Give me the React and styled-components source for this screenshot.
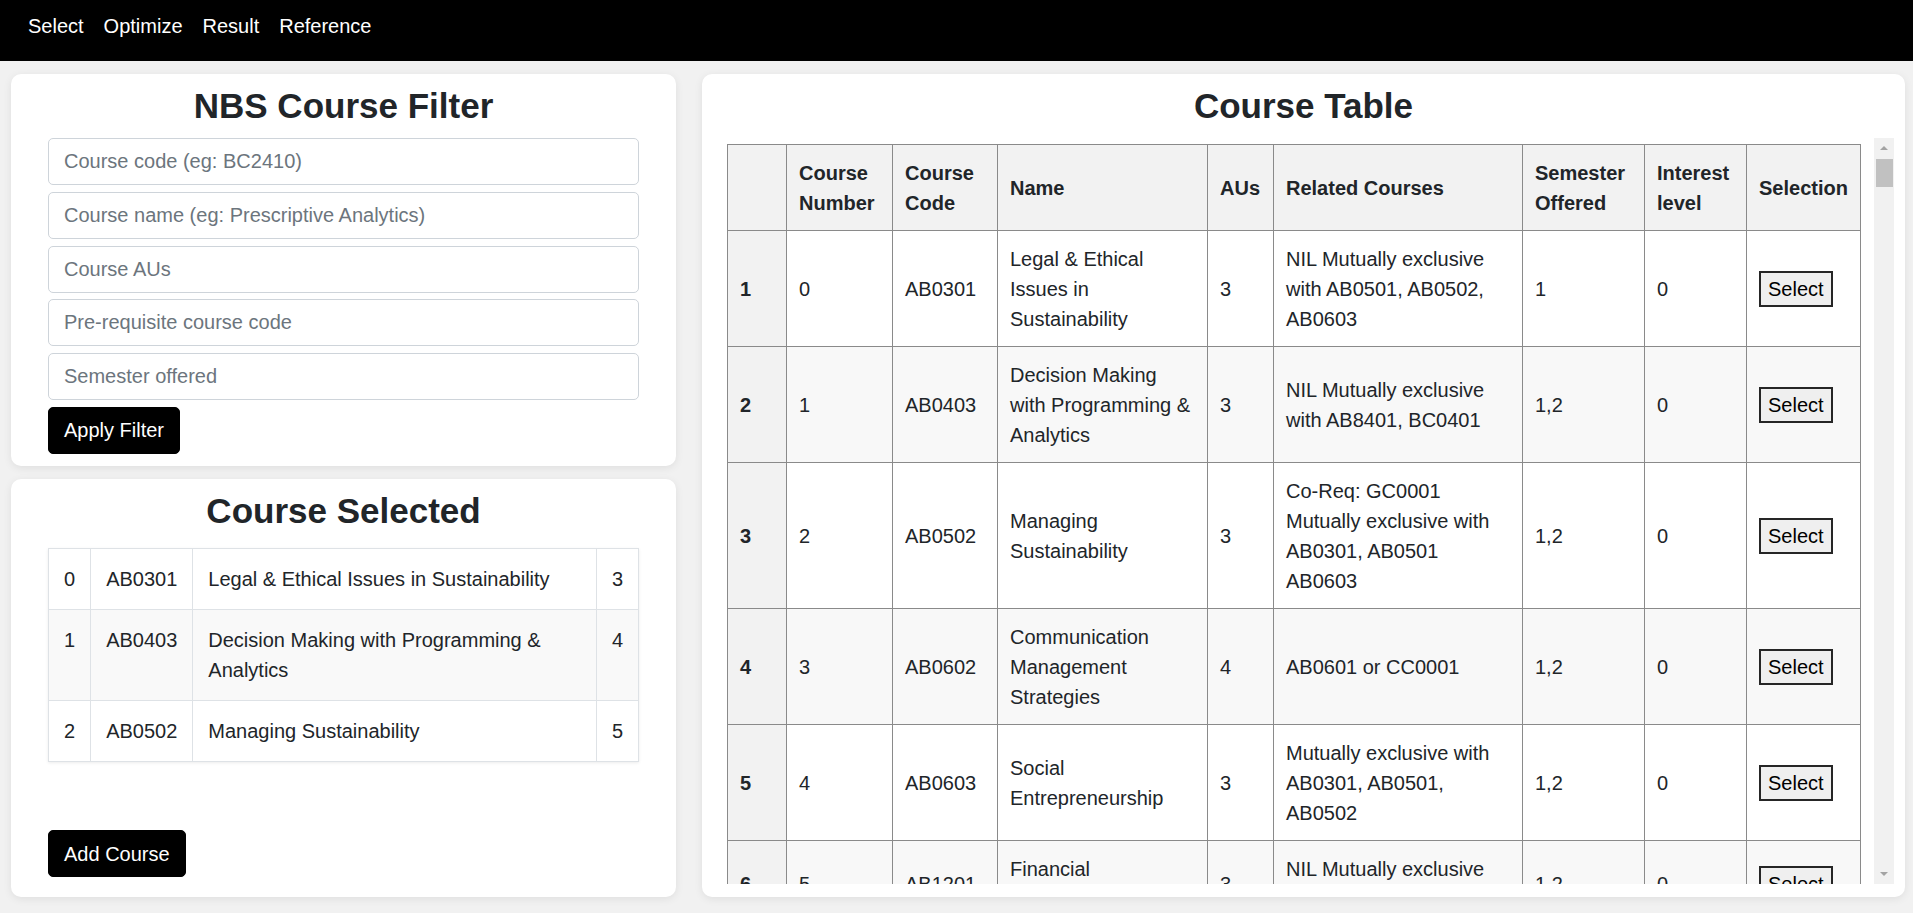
import React from "react";
import styled, { createGlobalStyle } from "styled-components";

const GlobalStyle = createGlobalStyle`
  * {
    box-sizing: border-box;
  }

  body {
    margin: 0;
    background: #f1f1f1;
    font-family: "Liberation Sans", Arial, sans-serif;
    font-size: 20px;
    line-height: 1.5;
    color: #212529;
  }
`;

const courses = [
  { code: "AB0301", name: "Legal & Ethical Issues in Sustainability", au: 3, related: "NIL Mutually exclusive with AB0501, AB0502, AB0603", sem: "1" },
  { code: "AB0403", name: "Decision Making with Programming & Analytics", au: 3, related: "NIL Mutually exclusive with AB8401, BC0401", sem: "1,2" },
  { code: "AB0502", name: "Managing Sustainability", au: 3, related: "Co-Req: GC0001 Mutually exclusive with AB0301, AB0501 AB0603", sem: "1,2" },
  { code: "AB0602", name: "Communication Management Strategies", au: 4, related: "AB0601 or CC0001", sem: "1,2" },
  { code: "AB0603", name: "Social Entrepreneurship", au: 3, related: "Mutually exclusive with AB0301, AB0501, AB0502", sem: "1,2" },
  { code: "AB1201", name: "Financial Management", au: 3, related: "NIL Mutually exclusive with BC2402", sem: "1,2" },
];

const selected = [
  { id: 0, code: "AB0301", name: "Legal & Ethical Issues in Sustainability", au: 3 },
  { id: 1, code: "AB0403", name: "Decision Making with Programming & Analytics", au: 4 },
  { id: 2, code: "AB0502", name: "Managing Sustainability", au: 5 },
];

const colWidths = [59, 106, 105, 210, 66, 249, 122, 102, 114];

const filterFields = [
  "Course code (eg: BC2410)",
  "Course name (eg: Prescriptive Analytics)",
  "Course AUs",
  "Pre-requisite course code",
  "Semester offered",
];

const App = () => {
  return (
    <>
      <GlobalStyle />
      <NavBar>
        <NavLink href="#">Select</NavLink>
        <NavLink href="#">Optimize</NavLink>
        <NavLink href="#">Result</NavLink>
        <NavLink href="#">Reference</NavLink>
      </NavBar>

      <Main>
        <LeftColumn>
          {/* filter */}
          <Card $pad="11px 37px 12px">
            <Title>NBS Course Filter</Title>
            <FilterForm onSubmit={(e) => e.preventDefault()}>
              {filterFields.map((f) => (
                <Input key={f} placeholder={f} />
              ))}
              <DarkButton type="submit">Apply Filter</DarkButton>
            </FilterForm>
          </Card>

          {/* selected courses */}
          <Card $pad="11px 37px 20px" $grow>
            <Title $gap={16.5}>Course Selected</Title>
            <SelectedTable>
              <tbody>
                {selected.map((c) => (
                  <tr key={c.id}>
                    <td>{c.id}</td>
                    <td>{c.code}</td>
                    <td>{c.name}</td>
                    <td>{c.au}</td>
                  </tr>
                ))}
              </tbody>
            </SelectedTable>
            <DarkButton $push>Add Course</DarkButton>
          </Card>
        </LeftColumn>

        {/* course table */}
        <Card $pad="11px 11px 13px">
          <Title>Course Table</Title>
          <TableArea>
            <TableViewport>
              <CourseTable>
                <colgroup>
                  {colWidths.map((w, i) => (
                    <col key={i} style={{ width: w }} />
                  ))}
                </colgroup>
                <thead>
                  <tr>
                    <th></th>
                    <th>Course Number</th>
                    <th>Course Code</th>
                    <th>Name</th>
                    <th>AUs</th>
                    <th>Related Courses</th>
                    <th>Semester Offered</th>
                    <th>Interest level</th>
                    <th>Selection</th>
                  </tr>
                </thead>
                <tbody>
                  {courses.map((c, i) => (
                    <tr key={i}>
                      <th scope="row">{i + 1}</th>
                      <td>{i}</td>
                      <td>{c.code}</td>
                      <td>{c.name}</td>
                      <td>{c.au}</td>
                      <td>{c.related}</td>
                      <td>{c.sem}</td>
                      <td>0</td>
                      <td>
                        <SelectButton>Select</SelectButton>
                      </td>
                    </tr>
                  ))}
                </tbody>
              </CourseTable>
            </TableViewport>
            <ScrollTrack>
              <ScrollArrow $dir="up" />
              <ScrollThumb />
              <ScrollArrow $dir="down" />
            </ScrollTrack>
          </TableArea>
        </Card>
      </Main>
    </>
  );
};

export default App;

const NavBar = styled.nav`
  height: 61px;
  background: #000;
  display: flex;
  align-items: flex-start;
  padding: 11px 0 0 18px;
`;

const NavLink = styled.a`
  color: #fff;
  text-decoration: none;
  padding: 0 10px;
  line-height: 30px;
`;

const Main = styled.main`
  display: grid;
  grid-template-columns: 665px 1fr;
  gap: 26px;
  height: calc(100vh - 61px);
  padding: 13px 9px 16px 11px;
`;

const LeftColumn = styled.div`
  display: flex;
  flex-direction: column;
  gap: 13px;
  min-height: 0;
`;

const Card = styled.section`
  background: #fff;
  border-radius: 10px;
  box-shadow: 0 2px 8px rgba(0, 0, 0, 0.08);
  padding: ${(p) => p.$pad};
  display: flex;
  flex-direction: column;
  min-height: 0;
  ${(p) => p.$grow && "flex: 1;"}
`;

const Title = styled.h3`
  margin: 0 0 ${(p) => p.$gap || 11}px;
  font-size: 35px;
  font-weight: 700;
  line-height: 1.2;
  text-align: center;
  color: #212529;
`;

const FilterForm = styled.form`
  display: flex;
  flex-direction: column;
  align-items: flex-start;
  gap: 6.75px;
`;

const Input = styled.input`
  width: 100%;
  height: 47px;
  padding: 7.5px 15px;
  font: inherit;
  color: #495057;
  background: #fff;
  border: 1px solid #ced4da;
  border-radius: 5px;
  outline: none;

  &::placeholder {
    color: #6c757d;
  }
`;

const DarkButton = styled.button`
  font: inherit;
  color: #fff;
  background: #000;
  border: 1px solid #000;
  border-radius: 5px;
  padding: 7.5px 15px;
  cursor: pointer;
  ${(p) => p.$push && "margin-top: auto; align-self: flex-start;"}
`;

const SelectedTable = styled.table`
  width: 100%;
  border-collapse: collapse;
  box-shadow: 0 1px 3px rgba(0, 0, 0, 0.08);

  td {
    border: 1px solid #dee2e6;
    padding: 15px;
    vertical-align: top;
  }

  tr:nth-child(even) td {
    background: #f9f9f9;
  }
`;

const TableArea = styled.div`
  flex: 1;
  min-height: 0;
  display: flex;
`;

const TableViewport = styled.div`
  flex: 1;
  min-width: 0;
  overflow: hidden;
  padding: 6px 13.5px 0;
`;

const ScrollTrack = styled.div`
  width: 20px;
  flex-shrink: 0;
  background: #f1f1f1;
  display: flex;
  flex-direction: column;
  align-items: center;
`;

const ScrollArrow = styled.div`
  width: 100%;
  height: 20px;
  display: flex;
  align-items: center;
  justify-content: center;
  ${(p) => p.$dir === "down" && "margin-top: auto;"}

  &::before {
    content: "";
    width: 0;
    height: 0;
    border-left: 4.5px solid transparent;
    border-right: 4.5px solid transparent;
    ${(p) =>
      p.$dir === "up"
        ? "border-bottom: 4px solid #a3a3a3;"
        : "border-top: 4px solid #a3a3a3;"}
  }
`;

const ScrollThumb = styled.div`
  width: 17px;
  height: 28px;
  margin-top: 1px;
  background: #c1c1c1;
`;

const CourseTable = styled.table`
  width: 100%;
  table-layout: fixed;
  border-collapse: collapse;

  th,
  td {
    border: 1px solid #8a8a8a;
    padding: 12.5px;
    text-align: left;
    vertical-align: middle;
  }

  thead th {
    background: #f2f2f2;
    font-weight: 700;
  }

  tbody tr:nth-child(even) td {
    background: #f8f8f8;
  }

  tbody th {
    background: #f2f2f2;
    font-weight: 700;
  }
`;

const SelectButton = styled.button`
  display: block;
  font-family: inherit;
  font-size: 20px;
  line-height: 30px;
  color: #000;
  background: #efefef;
  border: 2px solid #262626;
  border-radius: 0;
  padding: 1px 7px;
  cursor: pointer;
`;
